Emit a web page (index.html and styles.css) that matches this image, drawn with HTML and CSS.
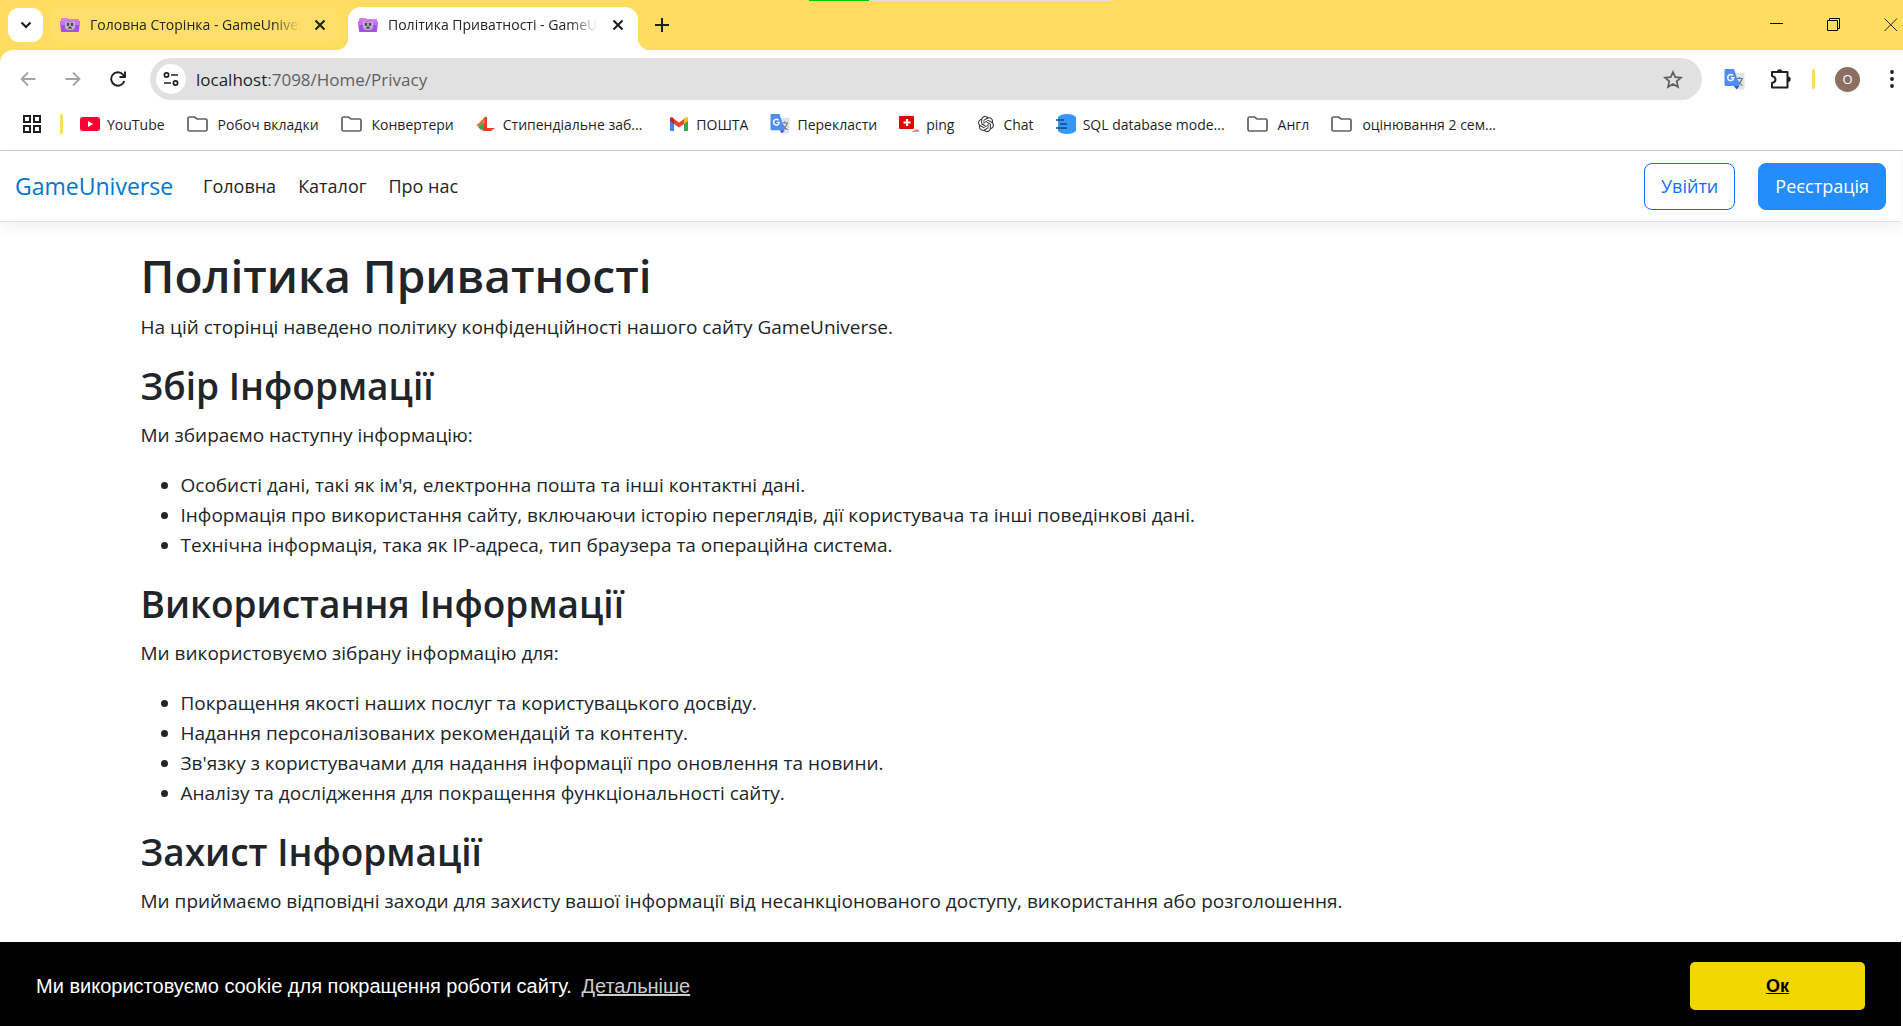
FILE: index.html
```html
<!DOCTYPE html>
<html lang="uk">
<head>
<meta charset="utf-8">
<title>Політика Приватності - GameUniverse</title>
<link rel="stylesheet" href="styles.css">
</head>
<body>
<svg class="sprite" aria-hidden="true">
  <symbol id="folder" viewBox="0 0 21 16"><path d="M1 2.500Q1 1 2.500 1H7.500L10 3H18.500Q20 3 20 4.500V13.500Q20 15 18.500 15H2.500Q1 15 1 13.500Z" fill="none" stroke="#5f6062" stroke-width="1.700"/></symbol>
  <symbol id="close" viewBox="0 0 12 12"><path d="M1.500 1.500L10.500 10.500M10.500 1.500L1.500 10.500" stroke="#1f1f1f" stroke-width="2.100"/></symbol>
  <symbol id="favicon" viewBox="0 0 20 16">
    <path d="M1 2Q1 1 2 1H7L9 2H18Q19 2 19 3V4H1Z" fill="#d77bf5"/>
    <path d="M0 4H20L19 14Q19 15 18 15H2Q1 15 1 14Z" fill="#a94df0"/>
    <path d="M0 4H20L19.600 8H.400Z" fill="#c277f7"/>
    <path d="M5 4L8 5.500H12L15 4V11L12.500 13H7.500L5 11Z" fill="#b9b4bd"/>
    <path d="M7 6.500L9 8.500M9 6.500L7 8.500M11 6.500L13 8.500M13 6.500L11 8.500M8.500 11.500L10 10L11.500 11.500" stroke="#34303a" stroke-width="1.200" fill="none"/>
  </symbol>
  <symbol id="translate" viewBox="0 0 21 21">
    <path d="M8 4H19.500Q20.500 4 20.500 5V19.500Q20.500 20.500 19.500 20.500H13Z" fill="#dfe2e6"/>
    <path d="M12 9.500H19M15.500 8V9.500M18 9.500Q17 14 12.500 16.500M13.500 11.500Q15 15 18.500 16.500" fill="none" stroke="#607d8b" stroke-width="1.200"/>
    <path d="M10 17H15.500L12.500 20.500Z" fill="#3c50c4"/>
    <path d="M1.500 0H10L15.500 17H1.500Q.500 17 .500 16V1Q.500 0 1.500 0Z" fill="#4f8df5"/>
    <path d="M9 6.600A3 3 0 1 0 9.700 8.800H6.900" fill="none" stroke="#fff" stroke-width="1.500"/>
  </symbol>
</svg>

<div class="tabs">
  <button class="tab-search" aria-label="Пошук вкладок"><svg width="12" height="8" viewBox="0 0 12 8"><path d="M1.500 1.500L6 6L10.500 1.500" fill="none" stroke="#1f1f1f" stroke-width="2.200"/></svg></button>
  <div class="tab">
    <svg class="fav"><use href="#favicon"/></svg>
    <span class="tab-title">Головна Сторінка - GameUniverse</span>
    <button class="icon-btn" aria-label="Закрити"><svg width="12" height="12"><use href="#close"/></svg></button>
  </div>
  <div class="tab active">
    <svg class="fav"><use href="#favicon"/></svg>
    <span class="tab-title">Політика Приватності - GameUniverse</span>
    <button class="icon-btn" aria-label="Закрити"><svg width="12" height="12"><use href="#close"/></svg></button>
  </div>
  <button class="icon-btn new-tab" aria-label="Нова вкладка"><svg width="14" height="14" viewBox="0 0 14 14"><path d="M7 0V14M0 7H14" stroke="#1f1f1f" stroke-width="2"/></svg></button>
  <div class="window-controls">
    <button class="icon-btn" aria-label="Згорнути"><svg width="14" height="14" viewBox="0 0 14 14"><path d="M0 5.500H13" stroke="#000"/></svg></button>
    <button class="icon-btn" aria-label="Відновити"><svg width="14" height="14" viewBox="0 0 14 14"><path d="M.500 2.500H10.500V12.500H.500ZM2.500 2V.500H12.500V10.500H11" fill="none" stroke="#000"/></svg></button>
    <button class="icon-btn" aria-label="Закрити вікно"><svg width="14" height="14" viewBox="0 0 14 14"><path d="M.500 .500L13 13M13 .500L.500 13" stroke="#222"/></svg></button>
  </div>
  <div class="progress"></div>
</div>

<div class="chrome">
<div class="toolbar">
  <div class="nav-buttons">
    <button class="icon-btn" aria-label="Назад"><svg width="16" height="16" viewBox="0 0 16 16"><path d="M15.500 8H2M8 1.500L1.500 8L8 14.500" fill="none" stroke="#a3a3a3" stroke-width="1.800"/></svg></button>
    <button class="icon-btn" aria-label="Вперед"><svg width="16" height="16" viewBox="0 0 16 16"><path d="M.500 8H14M8 1.500L14.500 8L8 14.500" fill="none" stroke="#a3a3a3" stroke-width="1.800"/></svg></button>
    <button class="icon-btn" aria-label="Оновити"><svg width="16" height="16" viewBox="0 0 16 16"><path d="M14.300 10A6.700 6.700 0 1 1 13 3.600L14.500 5.500M15 .500V6H9.500" fill="none" stroke="#1f1f1f" stroke-width="1.900"/></svg></button>
  </div>
  <div class="address">
    <button class="site-info" aria-label="Про сайт"><svg width="16" height="14" viewBox="0 0 16 14"><g fill="none" stroke="#1f1f1f" stroke-width="1.700"><circle cx="3.500" cy="3" r="2.100"/><path d="M8 3H15M1 11H8"/><circle cx="12.500" cy="11" r="2.100"/></g></svg></button>
    <span class="url"><span class="host">localhost</span>:7098/Home/Privacy</span>
    <button class="icon-btn" aria-label="Додати закладку"><svg width="20" height="19" viewBox="0 0 20 19"><path d="M10 2L12.300 7.200L18 7.700L13.700 11.400L15 17L10 14L5 17L6.300 11.400L2 7.700L7.700 7.200Z" fill="none" stroke="#5c5d5f" stroke-width="1.700"/></svg></button>
  </div>
  <div class="extensions">
    <svg width="21" height="21"><use href="#translate"/></svg>
    <button class="icon-btn" aria-label="Розширення"><svg width="22" height="22" viewBox="0 0 22 22"><path d="M2 4H17.500V19.500H2V15Q5.500 14 5.500 11.500Q5.500 9 2 8Z" fill="none" stroke="#1f1f1f" stroke-width="2" stroke-linejoin="round"/><path d="M7 4A2.700 2.700 0 0 1 12.400 4ZM18 8.600A2.700 2.700 0 0 1 18 14Z" fill="#1f1f1f"/></svg></button>
    <span class="divider"></span>
    <button class="avatar">O</button>
    <button class="icon-btn" aria-label="Меню"><svg width="4" height="18" viewBox="0 0 4 18"><g fill="#1f1f1f"><circle cx="2" cy="2" r="1.900"/><circle cx="2" cy="9" r="1.900"/><circle cx="2" cy="16" r="1.900"/></g></svg></button>
  </div>
</div>
<nav class="bookmarks" aria-label="Закладки">
  <button class="icon-btn" aria-label="Групи вкладок"><svg width="18" height="18" viewBox="0 0 18 18"><path d="M1 1H7V7H1ZM11 1H17V7H11ZM1 11H7V17H1ZM11 11H17V17H11Z" fill="none" stroke="#1f1f1f" stroke-width="2"/></svg></button>
  <span class="divider"></span>
  <a href="#"><svg width="20" height="20" viewBox="0 0 20 20"><rect y="3" width="20" height="14" rx="3" fill="#ff0033"/><path d="M8 7L13 10L8 13Z" fill="#fff"/></svg>YouTube</a>
  <a href="#" class="group"><svg width="21" height="16"><use href="#folder"/></svg>Робоч вкладки</a>
  <a href="#" class="group"><svg width="21" height="16"><use href="#folder"/></svg>Конвертери</a>
  <a href="#"><svg width="20" height="20" viewBox="0 0 20 20"><path d="M9 3V7L4 12L1 12Z" fill="#f58a3c"/><path d="M0 12L9 3V5L4 12Z" fill="#ef6a32"/><path d="M2 13L8 8V16H5Z" fill="#39a845"/><path d="M9 3L7 17H15L19 14H11V3Z" fill="#ee3c23"/></svg>Стипендіальне заб...</a>
  <a href="#" class="mail"><svg width="20" height="20" viewBox="0 0 20 20"><path d="M1 6V16Q1 17 2 17H5V9Z" fill="#4285f4"/><path d="M19 6V16Q19 17 18 17H15V9Z" fill="#34a853"/><path d="M5 5V10L10 13.500L15 10V5L10 8.500Z" fill="#ea4335"/><path d="M1 5Q1 3 3 3L5 5V10L1 7Z" fill="#c5221f"/><path d="M19 5Q19 3 17 3L15 5V10L19 7Z" fill="#fbbc04"/></svg>ПОШТА</a>
  <a href="#"><svg width="20" height="20"><use href="#translate"/></svg>Перекласти</a>
  <a href="#"><svg width="20" height="20" viewBox="0 0 20 20"><path d="M5 3V1H10V3" fill="none" stroke="#ccc"/><rect y="2" width="15" height="13" rx="1" fill="#dc0808"/><path d="M8 5V12M4.500 8.500H11.500" stroke="#fff" stroke-width="2.200"/><path d="M2 17H12" stroke="#eee"/><path d="M13 18Q16 14 20 16V18Z" fill="#e2898b"/></svg>ping</a>
  <a href="#"><svg width="20" height="20" viewBox="0 0 24 24"><path fill="#333" d="M22.282 9.821a5.985 5.985 0 0 0-.516-4.910 6.046 6.046 0 0 0-6.510-2.900A6.065 6.065 0 0 0 4.981 4.182a5.985 5.985 0 0 0-3.998 2.900 6.046 6.046 0 0 0 .743 7.097 5.980 5.980 0 0 0 .511 4.911 6.051 6.051 0 0 0 6.515 2.900A5.985 5.985 0 0 0 13.260 24a6.056 6.056 0 0 0 5.772-4.206 5.990 5.990 0 0 0 3.998-2.900 6.056 6.056 0 0 0-.748-7.073zM13.260 22.430a4.476 4.476 0 0 1-2.876-1.041l.142-.080 4.778-2.758a.795.795 0 0 0 .393-.681v-6.737l2.020 1.169a.071.071 0 0 1 .038.052v5.583a4.504 4.504 0 0 1-4.495 4.493zM3.600 18.304a4.471 4.471 0 0 1-.535-3.014l.142.085 4.783 2.759a.771.771 0 0 0 .781 0l5.843-3.369v2.332a.080.080 0 0 1-.033.062L9.740 19.950a4.499 4.499 0 0 1-6.140-1.646zM2.341 7.896a4.485 4.485 0 0 1 2.366-1.973V11.600a.766.766 0 0 0 .388.677l5.814 3.354-2.020 1.169a.076.076 0 0 1-.071 0l-4.830-2.787A4.504 4.504 0 0 1 2.341 7.872zm16.596 3.856l-5.833-3.387L15.120 7.200a.076.076 0 0 1 .071 0l4.830 2.792a4.494 4.494 0 0 1-.676 8.104v-5.677a.790.790 0 0 0-.408-.667zm2.011-3.023l-.142-.085-4.773-2.782a.776.776 0 0 0-.786 0L9.409 9.230V6.897a.066.066 0 0 1 .028-.061l4.830-2.787a4.499 4.499 0 0 1 6.680 4.660zM8.307 12.863l-2.020-1.164a.080.080 0 0 1-.038-.057V6.075a4.499 4.499 0 0 1 7.376-3.454l-.142.081-4.778 2.758a.795.795 0 0 0-.393.681zm1.097-2.365l2.602-1.500 2.607 1.500v2.999l-2.597 1.500-2.607-1.500z" transform="translate(2.400 2.400) scale(.8)"/></svg>Chat</a>
  <a href="#"><svg width="20" height="20" viewBox="0 0 20 20"><path d="M2 3Q5 0 11 0T20 3V17Q17 20 11 20T2 17Z" fill="#3399ff"/><path d="M0 6H8M4 10H11M0 14H11" stroke="#174a7d" stroke-width="1.300"/></svg>SQL database mode...</a>
  <a href="#" class="group"><svg width="21" height="16"><use href="#folder"/></svg>Англ</a>
  <a href="#" class="group"><svg width="21" height="16"><use href="#folder"/></svg>оцінювання 2 сем...</a>
</nav>
</div>

<div class="viewport">
<header class="site-nav">
  <a class="brand" href="#">GameUniverse</a>
  <nav class="links"><a href="#">Головна</a><a href="#">Каталог</a><a href="#">Про нас</a></nav>
  <div class="auth"><button class="btn outline">Увійти</button><button class="btn solid">Реєстрація</button></div>
</header>
<main class="content">
  <h1>Політика Приватності</h1>
  <p>На цій сторінці наведено політику конфіденційності нашого сайту GameUniverse.</p>
  <h2>Збір Інформації</h2>
  <p>Ми збираємо наступну інформацію:</p>
  <ul>
    <li>Особисті дані, такі як ім'я, електронна пошта та інші контактні дані.</li>
    <li>Інформація про використання сайту, включаючи історію переглядів, дії користувача та інші поведінкові дані.</li>
    <li>Технічна інформація, така як IP-адреса, тип браузера та операційна система.</li>
  </ul>
  <h2>Використання Інформації</h2>
  <p>Ми використовуємо зібрану інформацію для:</p>
  <ul>
    <li>Покращення якості наших послуг та користувацького досвіду.</li>
    <li>Надання персоналізованих рекомендацій та контенту.</li>
    <li>Зв'язку з користувачами для надання інформації про оновлення та новини.</li>
    <li>Аналізу та дослідження для покращення функціональності сайту.</li>
  </ul>
  <h2>Захист Інформації</h2>
  <p>Ми приймаємо відповідні заходи для захисту вашої інформації від несанкціонованого доступу, використання або розголошення.</p>
</main>
<div class="cookie" role="dialog" aria-label="Cookie">
  <span>Ми використовуємо cookie для покращення роботи сайту. <a href="#">Детальніше</a></span>
  <button>Ок</button>
</div>
</div>
</body>
</html>
```
FILE: styles.css
```css
* { box-sizing: border-box; }
body {
  margin: 0;
  height: 100vh;
  display: flex;
  flex-direction: column;
  overflow: hidden;
  font-family: "Open Sans", "Noto Sans", sans-serif;
  color: #212529;
  background: #fff;
}
button { font: inherit; border: 0; padding: 0; cursor: pointer; }
a { text-decoration: none; color: inherit; }
svg { flex: none; display: block; }
.sprite { position: absolute; width: 0; height: 0; }
.icon-btn { display: flex; background: none; }

/* Tab strip */
.tabs {
  position: relative;
  display: flex;
  align-items: flex-start;
  height: 50px;
  flex: none;
  padding: 7px 5px 0 8px;
  background: #ffdd5e;
}
.tab-search {
  display: flex;
  align-items: center;
  justify-content: center;
  width: 35px;
  height: 34px;
  margin: 1px 7px 0 0;
  border-radius: 11px;
  background: #fff;
}
.tab {
  position: relative;
  display: flex;
  align-items: center;
  width: 290px;
  height: 35px;
  padding: 0 14px 0 10px;
  border-radius: 12px;
  background: #ffdf69;
}
.tab.active {
  height: 43px;
  margin-left: 8px;
  padding-bottom: 8px;
  border-radius: 13px 13px 0 0;
  background: #fff;
}
.tab.active::before, .tab.active::after {
  content: "";
  position: absolute;
  bottom: 0;
  width: 13px;
  height: 13px;
}
.tab.active::before { left: -13px; background: radial-gradient(circle at 0 0, transparent 13px, #fff 14px); }
.tab.active::after { right: -13px; background: radial-gradient(circle at 100% 0, transparent 13px, #fff 14px); }
.fav { width: 20px; height: 16px; margin-right: 10px; }
.tab-title {
  flex: 1;
  overflow: hidden;
  white-space: nowrap;
  font-size: 14px;
  margin-right: 14px;
  -webkit-mask-image: linear-gradient(to right, #000 calc(100% - 28px), transparent);
  mask-image: linear-gradient(to right, #000 calc(100% - 28px), transparent);
}
.new-tab { margin: 11px 0 0 17px; }
.window-controls { display: flex; gap: 43px; margin: 11px 0 0 auto; }
.progress {
  position: absolute;
  top: 0;
  left: 809px;
  width: 301px;
  height: 1px;
  background: linear-gradient(to right, #00c800 60px, #e0e0e0 60px);
}

/* Toolbar */
.chrome { flex: none; background: linear-gradient(#ffdd5e 13px, #fff 13px); border-bottom: 1px solid #c9c9c9; }
.toolbar {
  display: flex;
  align-items: center;
  padding: 8px 9px 0 20px;
  border-radius: 13px 0 0 0;
  background: #fff;
}
.nav-buttons { display: flex; gap: 29px; }
.address {
  flex: 1;
  display: flex;
  align-items: center;
  height: 42px;
  margin: 0 22px 0 24px;
  padding: 0 19px 0 6px;
  border-radius: 21px;
  background: #e1e1e1;
}
.site-info {
  display: flex;
  align-items: center;
  justify-content: center;
  width: 30px;
  height: 30px;
  border-radius: 50%;
  background: #fff;
}
.url { flex: 1; margin-left: 10px; font-size: 17px; color: #5f6062; }
.host { color: #1f1f1f; }
.extensions { display: flex; align-items: center; gap: 20px; }
.extensions > :nth-child(2) { margin-left: 5px; }
.divider { width: 3px; height: 20px; border-radius: 2px; background: #ffdd5e; }
.avatar {
  width: 25px;
  height: 25px;
  border-radius: 50%;
  background: #8d6e63;
  color: #fff;
  font-size: 13px;
}
.extensions > :last-child { margin-left: 10px; }

.bookmarks {
  display: flex;
  align-items: center;
  gap: 22px;
  height: 50px;
  padding: 0 23px 2px;
  font-size: 14px;
  color: #1f1f1f;
}
.bookmarks > .divider { margin: 0 -5px 0 -3px; }
.bookmarks a { display: flex; align-items: center; gap: 7px; white-space: nowrap; }
.bookmarks .group { gap: 10px; }
.bookmarks .mail { margin-left: 5px; }

/* Site */
.viewport { flex: 1; min-height: 0; display: flex; flex-direction: column; margin-right: 2px; }
.site-nav {
  flex: none;
  display: flex;
  align-items: center;
  height: 71px;
  padding: 0 15px;
  border-bottom: 1px solid #dee2e6;
  box-shadow: 0 5px 15px rgba(0, 0, 0, .06);
  font-size: 18px;
}
.brand { font-size: 23px; color: #0077cc; }
.links { display: flex; gap: 22px; margin-left: 30px; font-size: 18px; }
.auth { display: flex; gap: 23px; margin-left: auto; }
.btn { height: 47px; padding: 0 16px; border: 1px solid #0d6efd; border-radius: 8px; }
.outline { color: #0d6efd; background: #fff; }
.solid { color: #fff; background: #258cfb; border-color: #258cfb; }
.content {
  flex: 1;
  min-height: 0;
  overflow: hidden;
  width: 100%;
  max-width: 1650px;
  margin: 0 auto;
  padding: 23px 15px 0;
  font-size: 19px;
  line-height: 30px;
}
h1, h2 { margin: 0 0 10px; font-weight: 600; }
h1 { margin-bottom: 7px; font-size: 46px; line-height: 60px; }
h2 { font-size: 37px; line-height: 48px; }
p, ul { margin: 0 0 20px; }
ul { padding-left: 40px; }
.cookie {
  flex: none;
  display: flex;
  align-items: center;
  justify-content: space-between;
  padding: 20px 36px 16px;
  background: #000;
  color: #fff;
  font: 20px "Liberation Sans", Arial, sans-serif;
}
.cookie a { margin-left: 4px; color: #ccc; text-decoration: underline; }
.cookie button {
  width: 175px;
  height: 48px;
  border-radius: 5px;
  background: #f1d600;
  color: #000;
  font-size: 18px;
  font-weight: 700;
  text-decoration: underline;
}
```
